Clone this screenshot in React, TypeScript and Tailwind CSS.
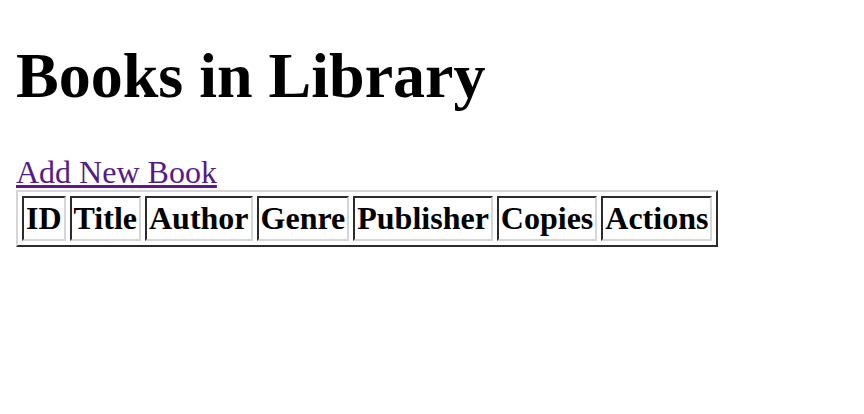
import React from 'react';

const headers = ['ID', 'Title', 'Author', 'Genre', 'Publisher', 'Copies', 'Actions'];

export default function App() {
  return (
    <div className="min-h-screen bg-white p-4 text-black font-['Liberation_Serif','Times_New_Roman',serif] text-[32px] leading-[1.15]">
      <h1 className="mt-[23px] mb-[41px] text-[64px] font-bold leading-[1.15]">Books in Library</h1>
      <a href="#" className="text-[#551a8b] underline">Add New Book</a>
      <table className="border-separate border-spacing-[4px] border-2 border-t-[#d6d6d6] border-l-[#d6d6d6] border-b-[#2b2b2b] border-r-[#2b2b2b]">
        <thead>
          <tr>
            {headers.map(h => (
              <th
                key={h}
                className="p-[2px] font-bold leading-[1.15] border-2 border-t-[#2b2b2b] border-l-[#2b2b2b] border-b-[#d6d6d6] border-r-[#d6d6d6]"
              >
                {h}
              </th>
            ))}
          </tr>
        </thead>
      </table>
    </div>
  );
}
